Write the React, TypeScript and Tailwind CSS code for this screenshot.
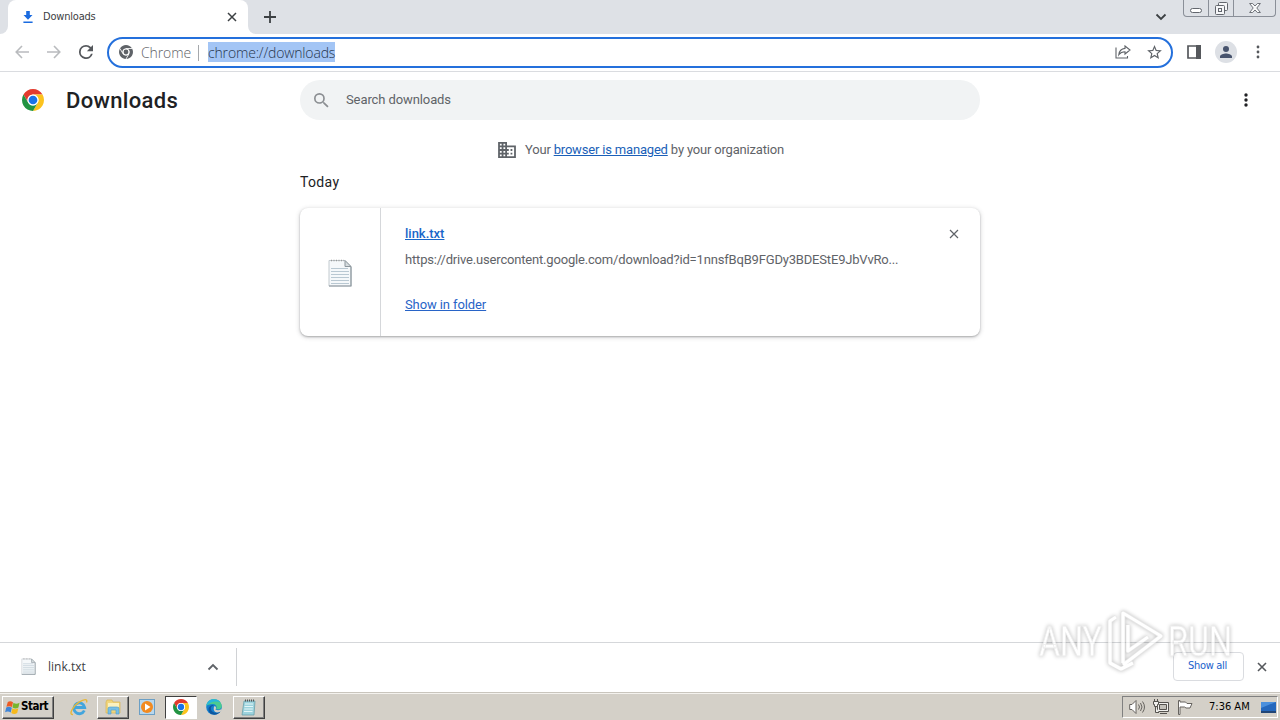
import React from 'react';

interface IconProps {
  className?: string;
}

const ChromeLogo: React.FC<IconProps & { mono?: boolean }> = ({ className, mono }) => {
  const wedge = 'M4.95 13A22 22 0 0 1 43.05 13L24 13A11 11 0 0 0 14.47 29.5Z';
  return (
    <svg viewBox="2 2 44 44" className={className}>
      <circle cx="24" cy="24" r="21" fill="#fff" />
      <path d={wedge} fill={mono ? '#5f6368' : '#e33b2e'} />
      <path d={wedge} fill={mono ? '#5f6368' : '#fcc31e'} transform="rotate(120 24 24)" />
      <path d={wedge} fill={mono ? '#5f6368' : '#229342'} transform="rotate(240 24 24)" />
      {mono && <path d="M24 13h19M14.5 29.5L5 13M33.5 29.5L24 46" stroke="#fff" strokeWidth="2.5" />}
      <circle cx="24" cy="24" r="11" fill="#fff" />
      <circle cx="24" cy="24" r={mono ? 7.5 : 8.7} fill={mono ? '#5f6368' : '#1a73e8'} />
    </svg>
  );
};

const CloseIcon: React.FC<IconProps> = ({ className }) => (
  <svg viewBox="0 0 10 10" className={className} fill="none" stroke="currentColor">
    <path d="M1 1l8 8M9 1l-8 8" />
  </svg>
);

const Dots: React.FC<IconProps & { r?: number }> = ({ className, r = 1.7 }) => (
  <svg viewBox="0 0 4 14" className={className} fill="currentColor">
    <circle cx="2" cy="2" r={r} />
    <circle cx="2" cy="7" r={r} />
    <circle cx="2" cy="12" r={r} />
  </svg>
);

const TextFile: React.FC<IconProps> = ({ className }) => (
  <svg viewBox="0 0 24 28" className={className}>
    <path d="M1 1.5h16l6 6V27H1z" fill="#f5f8fa" stroke="#c3cacf" />
    <path d="M23 8v19H1" fill="none" stroke="#8d989f" strokeWidth="1.2" />
    <path d="M3 1.5h13" stroke="#999" strokeWidth="1.6" strokeDasharray="1 1.5" />
    <path d="M17 1.5v6h6z" fill="#d6dcdf" stroke="#8d979d" />
    <path d="M3 9.5h17M3 12.5h18M3 15.5h18M3 18.5h18M3 21.5h18M3 24.5h18" stroke="#b9c8d2" />
  </svg>
);

const TabStrip = () => (
  <div className="flex h-[34px] bg-[#dee1e6]">
    <div className="w-2 bg-white">
      <div className="h-full rounded-br-lg bg-[#dee1e6]" />
    </div>
    <div className="flex w-60 items-center rounded-t-lg bg-white pr-[11px] pl-[15px]">
      <svg viewBox="0 0 10 12" className="h-3 w-2.5" fill="#1a6be0">
        <path d="M3.2 0h3.6v4H9.5L5 8.7.5 4h2.7zM.4 10.5h9.2V12H.4z" />
      </svg>
      <span className="ml-2.5 flex-1 font-['DejaVu_Sans_Condensed','DejaVu_Sans',sans-serif] text-[11px] tracking-[-0.2px] text-[#3c4043]">
        Downloads
      </span>
      <CloseIcon className="h-2.5 w-2.5 stroke-[1.5] text-[#3c4043]" />
    </div>
    <div className="w-2 bg-white">
      <div className="h-full rounded-bl-lg bg-[#dee1e6]" />
    </div>
    <svg viewBox="0 0 12 12" className="mt-[11px] ml-2 h-3 w-3" stroke="#3c4043" strokeWidth="1.8">
      <path d="M6 0v12M0 6h12" />
    </svg>
    <div className="flex-1" />
    <svg viewBox="0 0 12 8" className="mt-[13px] h-2 w-3" fill="none" stroke="#3c4043" strokeWidth="1.8">
      <path d="M1.5 1.5L6 6l4.5-4.5" />
    </svg>
    <div className="mr-1 ml-4 flex h-[17px] w-[93px] rounded-b border border-t-0 border-[#8a8f98]">
      <div className="flex w-[25px] items-end justify-center border-r border-[#8a8f98] pb-[3px]">
        <div className="h-[5px] w-3 rounded-sm border border-[#62666d] bg-white" />
      </div>
      <div className="flex w-[25px] justify-center border-r border-[#8a8f98] pt-0.5">
        <svg viewBox="0 0 13 13" className="h-[13px] w-[13px]" fill="#f5f6f8" stroke="#62666d">
          <rect x="3.5" y=".5" width="9" height="8" rx="1" />
          <rect x=".5" y="3.5" width="9" height="9" rx="1" />
          <rect x="3.5" y="6.5" width="3" height="3" />
        </svg>
      </div>
      <div className="flex flex-1 justify-center pt-[3px]">
        <svg viewBox="0 0 12 10" className="h-2.5 w-3" fill="#f8f9fa" stroke="#62666d" strokeWidth=".9">
          <path d="M.6.5h3L6 3 8.4.5h3L7.8 5l3.6 4.5h-3L6 7 3.6 9.5h-3L4.2 5z" />
        </svg>
      </div>
    </div>
  </div>
);

const Toolbar = () => (
  <div className="flex h-[38px] items-center border-b border-[#dadce0] bg-white">
    <svg viewBox="0 0 14 14" className="mb-px ml-[15px] h-3.5 w-3.5" fill="none" stroke="#b9bbbe" strokeWidth="1.6">
      <path d="M14 7H1.5M7 1L1.2 7 7 13" />
    </svg>
    <svg viewBox="0 0 14 14" className="mb-px ml-[18px] h-3.5 w-3.5" fill="none" stroke="#b9bbbe" strokeWidth="1.6">
      <path d="M0 7h12.5M7 1l5.8 6L7 13" />
    </svg>
    <svg viewBox="4 4 16 16" className="mb-px ml-[18px] h-3.5 w-3.5" fill="#55585c">
      <path d="M17.65 6.35A7.958 7.958 0 0 0 12 4a8 8 0 1 0 7.73 10h-2.08A6 6 0 1 1 12 6c1.66 0 3.14.69 4.22 1.78L13 11h7V4z" />
    </svg>
    <div className="ml-3.5 flex h-[31px] w-[1066px] items-center rounded-full border-2 border-[#2470dc] bg-white pr-2 pl-2.5 font-['Open_Sans',sans-serif] text-sm font-light">
      <ChromeLogo mono className="mb-px h-3.5 w-3.5" />
      <span className="ml-2 w-[50px] whitespace-nowrap tracking-[-0.1px] text-[#5f6368]">Chrome</span>
      <div className="ml-[7px] h-4 w-px bg-[#a5a8ac]" />
      <span className="mb-0.5 ml-[9px] h-5 bg-[#a3c5f5] leading-[21px] tracking-[-0.16px] text-[#27364d]">
        chrome://downloads
      </span>
      <div className="flex-1" />
      <svg viewBox="0 0 16 14" className="mb-px h-3.5 w-4" fill="none" stroke="#5f6368" strokeWidth="1.1">
        <path d="M1 2.5V13h11.5v-2" />
        <path d="M10 1l5 4-5 4V6.8C7.2 6.8 5.2 7.8 3.8 9.7 4.2 6.4 6 3.8 10 3.4z" />
      </svg>
      <svg viewBox="2 2 20 19" className="mr-px mb-px ml-4 h-3.5 w-[15px]" fill="#5f6368">
        <path d="M22 9.24l-7.19-.62L12 2 9.19 8.63 2 9.24l5.46 4.73L5.82 21 12 17.27 18.18 21l-1.63-7.03zM12 15.4l-3.76 2.27 1-4.28-3.32-2.88 4.38-.38L12 6.1l1.71 4.04 4.38.38-3.32 2.88 1 4.28z" />
      </svg>
    </div>
    <svg viewBox="0 0 14 14" className="mb-px ml-3.5 h-3.5 w-3.5">
      <path d="M1 1h12v12H1z" fill="none" stroke="#55585c" strokeWidth="1.7" />
      <path d="M9 0h5v14H9z" fill="#55585c" />
    </svg>
    <div className="mb-px ml-3.5 flex h-[22px] w-[22px] items-center justify-center rounded-full bg-[#dde0e5]">
      <svg viewBox="4 4 16 16" className="h-3 w-3" fill="#47536d">
        <path d="M12 12a4 4 0 1 0 0-8 4 4 0 0 0 0 8zm0 2c-2.67 0-8 1.34-8 4v2h16v-2c0-2.66-5.33-4-8-4z" />
      </svg>
    </div>
    <Dots r={1.4} className="mb-px ml-[19px] h-3.5 w-1 text-[#55585c]" />
  </div>
);

const PageHeader = () => (
  <div className="flex h-14 items-center">
    <ChromeLogo className="ml-[22px] h-[22px] w-[22px]" />
    <h1 className="ml-[22px] w-[234px] text-[22px] font-medium tracking-[0.35px] text-[#202124]">Downloads</h1>
    <div className="flex h-10 w-[680px] items-center rounded-full bg-[#f1f3f4] pl-3.5">
      <svg viewBox="3 3 18 18" className="h-[15px] w-[15px]" fill="#8b8e92">
        <path d="M15.5 14h-.79l-.28-.27A6.471 6.471 0 0 0 16 9.5 6.5 6.5 0 1 0 9.5 16c1.61 0 3.09-.59 4.23-1.57l.27.28v.79l5 4.99L20.49 19zm-6 0a4.5 4.5 0 1 1 0-9 4.5 4.5 0 0 1 0 9z" />
      </svg>
      <span className="ml-[17px] text-[13px] tracking-[-0.1px] text-[#5f6368]">Search downloads</span>
    </div>
    <div className="flex-1" />
    <Dots className="mr-8 h-3.5 w-1 text-[#202124]" />
  </div>
);

const DownloadItem = () => (
  <div className="flex h-32 rounded-lg bg-white shadow-[0_1px_2px_rgba(60,64,67,0.35),0_1px_4px_1px_rgba(60,64,67,0.16)]">
    <div className="flex w-[81px] items-center justify-center border-r border-[#d5d7da] pt-0.5">
      <TextFile className="h-7 w-6" />
    </div>
    <div className="flex flex-1 flex-col items-start pt-[17px] pl-6 text-[13px] leading-[18px]">
      <a className="font-medium text-[#1967c9] underline">link.txt</a>
      <span className="mt-2 tracking-[-0.18px] text-[#5f6368]">
        https://drive.usercontent.google.com/download?id=1nnsfBqB9FGDy3BDEStE9JbVvRo...
      </span>
      <a className="mt-[27px] tracking-[-0.1px] text-[#2864c7] underline">Show in folder</a>
    </div>
    <CloseIcon className="mt-[21px] mr-[21px] h-2.5 w-2.5 stroke-[1.2] text-[#5f6368]" />
  </div>
);

const playMark = 'M87 60V10l38 23-38 29M80 14l-6 4v42l11 6 12-6M92 22v26l20-14';

// Translucent mark lying over the page and the download shelf
const Watermark = () => (
  <svg
    viewBox="0 0 210 74"
    className="absolute top-[603px] left-[1036px] h-[74px] w-[210px] opacity-65 drop-shadow-[0_0_2px_rgba(0,0,0,0.4)]"
  >
    <g fill="#fff" fontFamily="Roboto, sans-serif" fontSize="43" stroke="#e2e2e2" strokeWidth=".8">
      <text x="3" y="53" textLength="63" lengthAdjust="spacingAndGlyphs">ANY</text>
      <text x="132" y="53" textLength="64" lengthAdjust="spacingAndGlyphs">RUN</text>
    </g>
    <g fill="none" strokeLinejoin="round">
      <path d={playMark} stroke="#d9d9d9" strokeWidth="4.5" />
      <path d={playMark} stroke="#fff" strokeWidth="3.2" />
    </g>
  </svg>
);

const Shelf = () => (
  <div className="flex h-[50px] items-center border-t border-[#d5d7da] bg-white pb-0.5 font-['DejaVu_Sans_Condensed','DejaVu_Sans',sans-serif]">
    <TextFile className="ml-[21px] h-[17px] w-[15px]" />
    <span className="ml-3 flex-1 font-['Open_Sans',sans-serif] text-xs text-[#3c4043]">link.txt</span>
    <svg viewBox="0 0 12 8" className="h-2 w-3" fill="none" stroke="#5f6368" strokeWidth="1.8">
      <path d="M1.5 6.5L6 2l4.5 4.5" />
    </svg>
    <div className="mr-[936px] ml-[17px] h-[38px] w-px bg-[#d0d2d5]" />
    <button className="h-[29px] w-[71px] rounded border border-[#dadce0] pr-0.5 text-[11px] tracking-[-0.3px] text-[#1a62cc]">
      Show all
    </button>
    <CloseIcon className="mr-[13px] ml-[13px] h-2.5 w-2.5 stroke-[1.6] text-[#55585c]" />
  </div>
);

const raised = 'border border-t-white border-l-white border-r-[#404040] border-b-[#404040] shadow-[inset_-1px_-1px_0_#808080]';

const Taskbar = () => (
  <div className="flex h-7 items-center border-t border-[#c9c5bd] bg-[#d4d0c8] pt-px font-['DejaVu_Sans_Condensed','DejaVu_Sans',sans-serif] text-[11px] text-black shadow-[inset_0_1px_0_#f4f2ee]">
    <div className={`ml-0.5 flex h-[23px] w-[52px] items-center pl-0.5 ${raised}`}>
      <svg viewBox="0 0 16 15" className="h-[15px] w-[15px]">
        <path d="M3 1.5Q6 0 8.5 2L7.5 7Q4.5 5.3 1.5 6.8z" fill="#ed5b24" />
        <path d="M9 2.5q3 2 6.5 0l-1.2 5q-3 2-6.3 0z" fill="#77b52b" />
        <path d="M1.3 7.5q3-1.5 6 .2l-1.2 5q-3-2-6-.2z" fill="#3f85d8" />
        <path d="M7.9 8.3q3 2 6.3 0l-1.2 5q-3 2-6.3 0z" fill="#f6b91c" />
      </svg>
      <span className="ml-px text-[11.5px] font-bold tracking-[-0.5px]">Start</span>
    </div>
    <svg viewBox="0 0 18 18" className="ml-4 h-[18px] w-[18px]" fill="none">
      <path d="M14.3 12.5A5.4 5.4 0 1 1 14.7 9.5H5" stroke="#42a5dd" strokeWidth="2.8" />
      <path d="M3 16.5C-2 17 3 8 9 4.2 14 1 18 .5 16.5 4.5" stroke="#e7b739" strokeWidth="1.4" />
    </svg>
    <div className={`ml-[9px] flex h-[23px] w-8 items-center justify-center ${raised}`}>
      <svg viewBox="0 0 17 16" className="h-4 w-[17px]">
        <path d="M1 3l1-2h5l1 2h7v11H1z" fill="#f0d57c" stroke="#d8b653" strokeWidth=".7" />
        <path d="M3 4h11v4H3z" fill="#faf1bf" />
        <path d="M3 15V9.5Q3 8 5 8h7q2 0 2 1.5V15h-3v-4H6v4z" fill="#77bfe5" stroke="#4c9ccd" strokeWidth=".6" />
      </svg>
    </div>
    <svg viewBox="0 0 16 16" className="ml-2.5 h-4 w-4">
      <rect x=".5" y=".5" width="15" height="15" fill="#b8d7ed" stroke="#6b9fc5" />
      <circle cx="8" cy="8" r="6" fill="#f28a20" />
      <path d="M6 4.5v7L11.5 8z" fill="#fff" />
    </svg>
    <div className="ml-2.5 flex h-[23px] w-8 items-center justify-center border border-t-[#404040] border-r-white border-b-white border-l-[#404040] bg-white">
      <ChromeLogo className="h-4 w-4" />
    </div>
    <svg viewBox="0 0 16 16" className="ml-[9px] h-4 w-4">
      <circle cx="8" cy="8" r="7.8" fill="#137fce" />
      <path d="M.3 7C1-2 15-2 15.8 7c.2 3-3 4-6 3 2-2 0-5-3-5S1 6 .3 7z" fill="#4acb91" />
      <path d="M.3 7C1 2 4 .2 8 .2c3 0 5 1 6.5 3.3C10 1 3 3 .3 7z" fill="#28b6dd" />
      <path d="M5.5 7.5C3 12 9 16 14.5 12.5 12 17 3 17 2.5 10.5 2.4 7.5 5 6 8 6z" fill="#0d579f" />
      <path d="M8.5 7q2.5 1 1 3.5 3 1.5 6.3-.5l-1 2.5q-6 2.5-7-1.5Q7.3 8.5 8.5 7z" fill="#d4d0c8" />
    </svg>
    <div className={`ml-[11px] flex h-[23px] w-8 items-center justify-center ${raised}`}>
      <svg viewBox="0 0 16 17" className="h-[17px] w-4">
        <path d="M3 2h11l-1 14H1z" fill="#9dd3dd" stroke="#609aa6" strokeWidth=".7" />
        <path d="M4 5h8M3.5 7.5H12M3.3 10h8.5M3 12.5h8.5" stroke="#f5ffff" strokeWidth=".8" />
        <path d="M4 1.5h10" stroke="#555" strokeWidth="2" strokeDasharray="1 1" />
      </svg>
    </div>
    <div className="flex-1" />
    <div className="mr-0.5 flex h-[22px] w-[156px] items-center border border-t-[#808080] border-r-white border-b-white border-l-[#808080] pl-1.5">
      <svg viewBox="0 0 16 14" className="h-3.5 w-4" fill="#fff" stroke="#66635f">
        <path d="M.7 4.5H3l4-4v13l-4-4H.7z" />
        <path d="M9.5 4.5q2 2.5 0 5M11.5 3q3 4 0 8M13.5 1.5q4 5.5 0 11" fill="none" />
      </svg>
      <svg viewBox="0 0 16 16" className="ml-2 h-4 w-4" fill="#f1f0ed" stroke="#55524e">
        <path d="M4.5 3.5h11v9h-11z" />
        <path d="M6.5 5.5h7v5h-7z" fill="#c3c0b9" />
        <path d="M7 14.5h7M.5 2.5h5v3h-1v2h-3v-2h-1zM1.5 0v2.5M4.5 0v2.5M2.5 7.5v6H6" />
      </svg>
      <svg viewBox="0 0 16 15" className="ml-2 h-[15px] w-4" fill="#fff" stroke="#66635f">
        <path d="M1.5.5H3V2h5.5L10 3.5h5l-2 4.5H9L7.5 7H3v7.5H1.5z" />
      </svg>
      <span className="ml-4 flex-1 whitespace-nowrap">7:36 AM</span>
      <svg viewBox="0 0 15 13" className="mr-px h-[13px] w-[15px]">
        <path d="M0 1h15v9H0z" fill="#2568bd" />
        <path d="M0 1h15L0 7z" fill="#4b90dd" />
        <path d="M0 10h15v2H0z" fill="#214576" />
      </svg>
    </div>
  </div>
);

const App: React.FC = () => {
  return (
    <div className="relative flex h-[720px] w-[1280px] flex-col overflow-hidden bg-white font-[Roboto,sans-serif]">
      <TabStrip />
      <Toolbar />
      <main className="flex-1">
        <PageHeader />
        <div className="mt-3 ml-0.5 flex h-5 items-center justify-center text-[13px] tracking-[-0.18px] text-[#5f6368]">
          <svg viewBox="2 3 20 18" className="mr-[9px] h-4 w-[18px]" fill="#5f6368">
            <path d="M12 7V3H2v18h20V7H12zM6 19H4v-2h2v2zm0-4H4v-2h2v2zm0-4H4V9h2v2zm0-4H4V5h2v2zm4 12H8v-2h2v2zm0-4H8v-2h2v2zm0-4H8V9h2v2zm0-4H8V5h2v2zm10 12h-8v-2h2v-2h-2v-2h2v-2h-2V9h8v10zm-2-8h-2v2h2v-2zm0 4h-2v2h2v-2z" />
          </svg>
          <span>
            Your <a className="text-[#1a5fb8] underline">browser is managed</a> by your organization
          </span>
        </div>
        <div className="mx-auto w-[680px]">
          <h2 className="mt-3 mb-4 text-sm leading-5 tracking-[0.35px] text-[#202124]">Today</h2>
          <DownloadItem />
        </div>
      </main>
      <Shelf />
      <Taskbar />
      <Watermark />
    </div>
  );
};

export default App;
